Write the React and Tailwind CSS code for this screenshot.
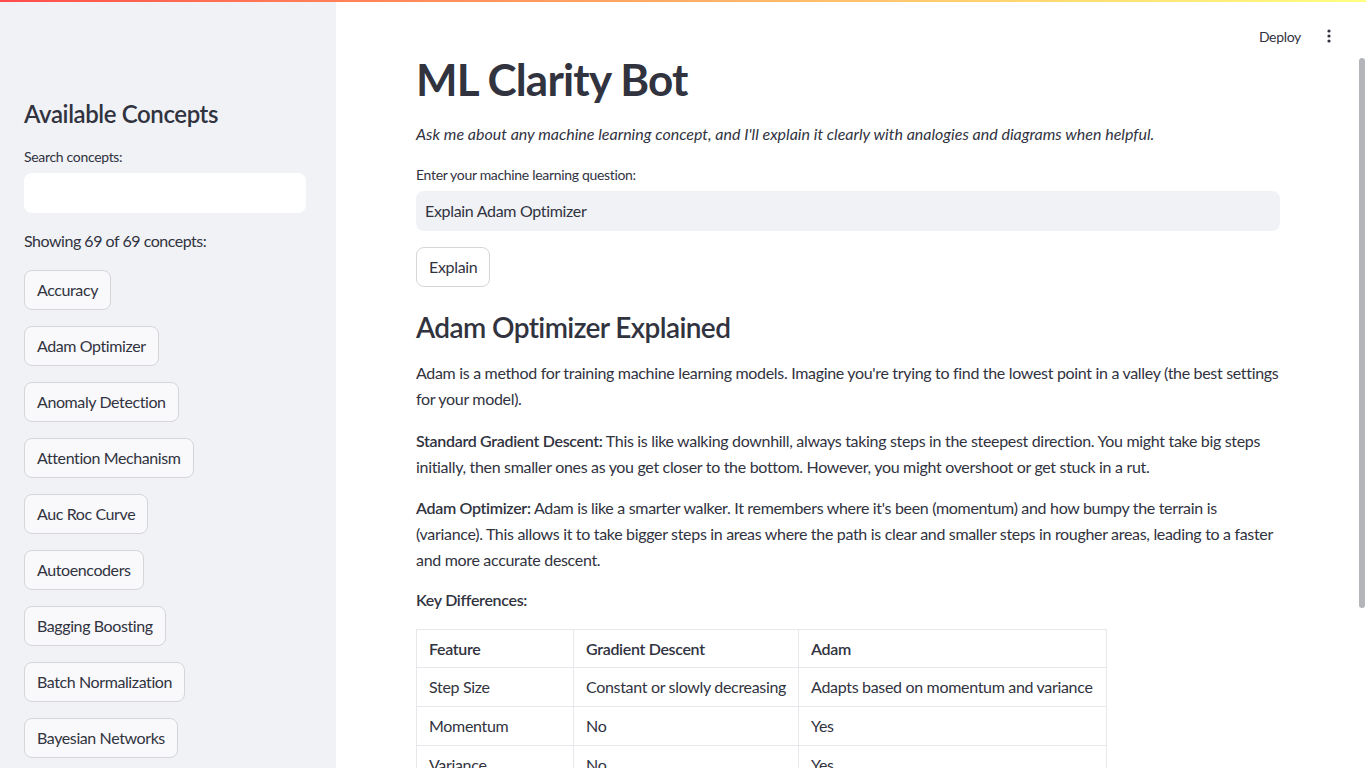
import React from 'react';

const concepts = [
  'Accuracy',
  'Adam Optimizer',
  'Anomaly Detection',
  'Attention Mechanism',
  'Auc Roc Curve',
  'Autoencoders',
  'Bagging Boosting',
  'Batch Normalization',
  'Bayesian Networks',
  'Bias Variance Tradeoff',
];

const rows = [
  ['Step Size', 'Constant or slowly decreasing', 'Adapts based on momentum and variance'],
  ['Momentum', 'No', 'Yes'],
  ['Variance', 'No', 'Yes'],
];

const Line = ({ children }) => <span className="block whitespace-nowrap">{children}</span>;

export default function App() {
  return (
    <div
      className="h-[768px] w-[1366px] overflow-hidden relative bg-white text-[#31333f] tracking-[-0.02em]"
      style={{ fontFamily: '"Source Sans Pro", Lato, "Liberation Sans", sans-serif' }}
    >
      {/* top decoration */}
      <div className="absolute top-0 left-0 right-0 h-[2px] z-10 bg-gradient-to-r from-[#ff4b4b] to-[#ffff80]" />

      <div className="flex h-full">
        {/* Sidebar */}
        <aside className="w-[336px] shrink-0 bg-[#f0f2f6] px-6 pt-[96px]">
          <h2 className="text-[24px] font-semibold leading-[36px] tracking-[-0.4px]">Available Concepts</h2>
          <label className="block mt-[16px] text-[14px] leading-[18px]">Search concepts:</label>
          <div className="mt-[7px] h-[40px] w-[282px] rounded-lg bg-white" />
          <p className="mt-[16px] text-[16px] leading-[24px] tracking-[-0.03em]">Showing 69 of 69 concepts:</p>
          <div className="mt-[17px] flex flex-col items-start gap-4">
            {concepts.map((c) => (
              <button
                key={c}
                className="h-[40px] px-3 rounded-lg border border-[#d5d6da] bg-[#f9f9fb] text-[16px] leading-none tracking-[-0.025em]"
              >
                {c}
              </button>
            ))}
          </div>
        </aside>

        {/* Main */}
        <main className="flex-1 relative">
          <header className="h-[60px] flex items-center justify-end pr-[29px] gap-[20px] pt-[12px]">
            <span className="text-[14px]">Deploy</span>
            <svg width="16" height="16" viewBox="0 0 16 16" fill="#31333f">
              <circle cx="8" cy="3" r="1.6" />
              <circle cx="8" cy="8" r="1.6" />
              <circle cx="8" cy="13" r="1.6" />
            </svg>
          </header>

          <div className="absolute right-[1px] top-[58px] w-[6px] h-[550px] rounded-full bg-[#b4b5ba]" />

          <div className="pl-[80px] w-[944px]">
            <h1 className="text-[44px] font-bold leading-[52px] -mt-[7px] tracking-[-0.8px]">ML Clarity Bot</h1>
            <p className="mt-[17px] italic text-[16px] leading-[24px] tracking-[0px]">
              Ask me about any machine learning concept, and I'll explain it clearly with analogies and diagrams when helpful.
            </p>
            <label className="block mt-[20px] text-[14px] leading-[18px]">Enter your machine learning question:</label>
            <div className="mt-[7px] h-[40px] rounded-lg bg-[#f0f2f6] flex items-center px-[9px] text-[16px]">
              Explain Adam Optimizer
            </div>
            <button className="mt-[16px] h-[40px] px-3 rounded-lg border border-[#d5d6da] bg-white text-[16px] leading-none tracking-[-0.02em]">
              Explain
            </button>

            <h2 className="mt-[20px] text-[28px] font-semibold leading-[40px] tracking-[-0.6px]">Adam Optimizer Explained</h2>

            <div className="text-[16px] leading-[26px]">
              <p className="mt-[13px]">
                <Line>Adam is a method for training machine learning models. Imagine you're trying to find the lowest point in a valley (the best settings</Line>
                <Line>for your model).</Line>
              </p>
              <p className="mt-[16px]">
                <Line><b className="font-semibold">Standard Gradient Descent:</b> This is like walking downhill, always taking steps in the steepest direction. You might take big steps</Line>
                <Line>initially, then smaller ones as you get closer to the bottom. However, you might overshoot or get stuck in a rut.</Line>
              </p>
              <p className="mt-[15px]">
                <Line><b className="font-semibold">Adam Optimizer:</b> Adam is like a smarter walker. It remembers where it's been (momentum) and how bumpy the terrain is</Line>
                <Line>(variance). This allows it to take bigger steps in areas where the path is clear and smaller steps in rougher areas, leading to a faster</Line>
                <Line>and more accurate descent.</Line>
              </p>
              <p className="mt-[14px] font-semibold">Key Differences:</p>
            </div>

            <table className="mt-[16px] border-collapse text-[16px]">
              <thead>
                <tr className="h-[38px]">
                  <th className="border border-[#e6e8ec] text-left font-semibold px-3 w-[157px]">Feature</th>
                  <th className="border border-[#e6e8ec] text-left font-semibold px-3 w-[224px]">Gradient Descent</th>
                  <th className="border border-[#e6e8ec] text-left font-semibold px-3 w-[308px]">Adam</th>
                </tr>
              </thead>
              <tbody>
                {rows.map((r) => (
                  <tr key={r[0]} className="h-[39px]">
                    {r.map((cell, i) => (
                      <td key={i} className="border border-[#e6e8ec] px-3 whitespace-nowrap">{cell}</td>
                    ))}
                  </tr>
                ))}
              </tbody>
            </table>
          </div>
        </main>
      </div>
    </div>
  );
}
